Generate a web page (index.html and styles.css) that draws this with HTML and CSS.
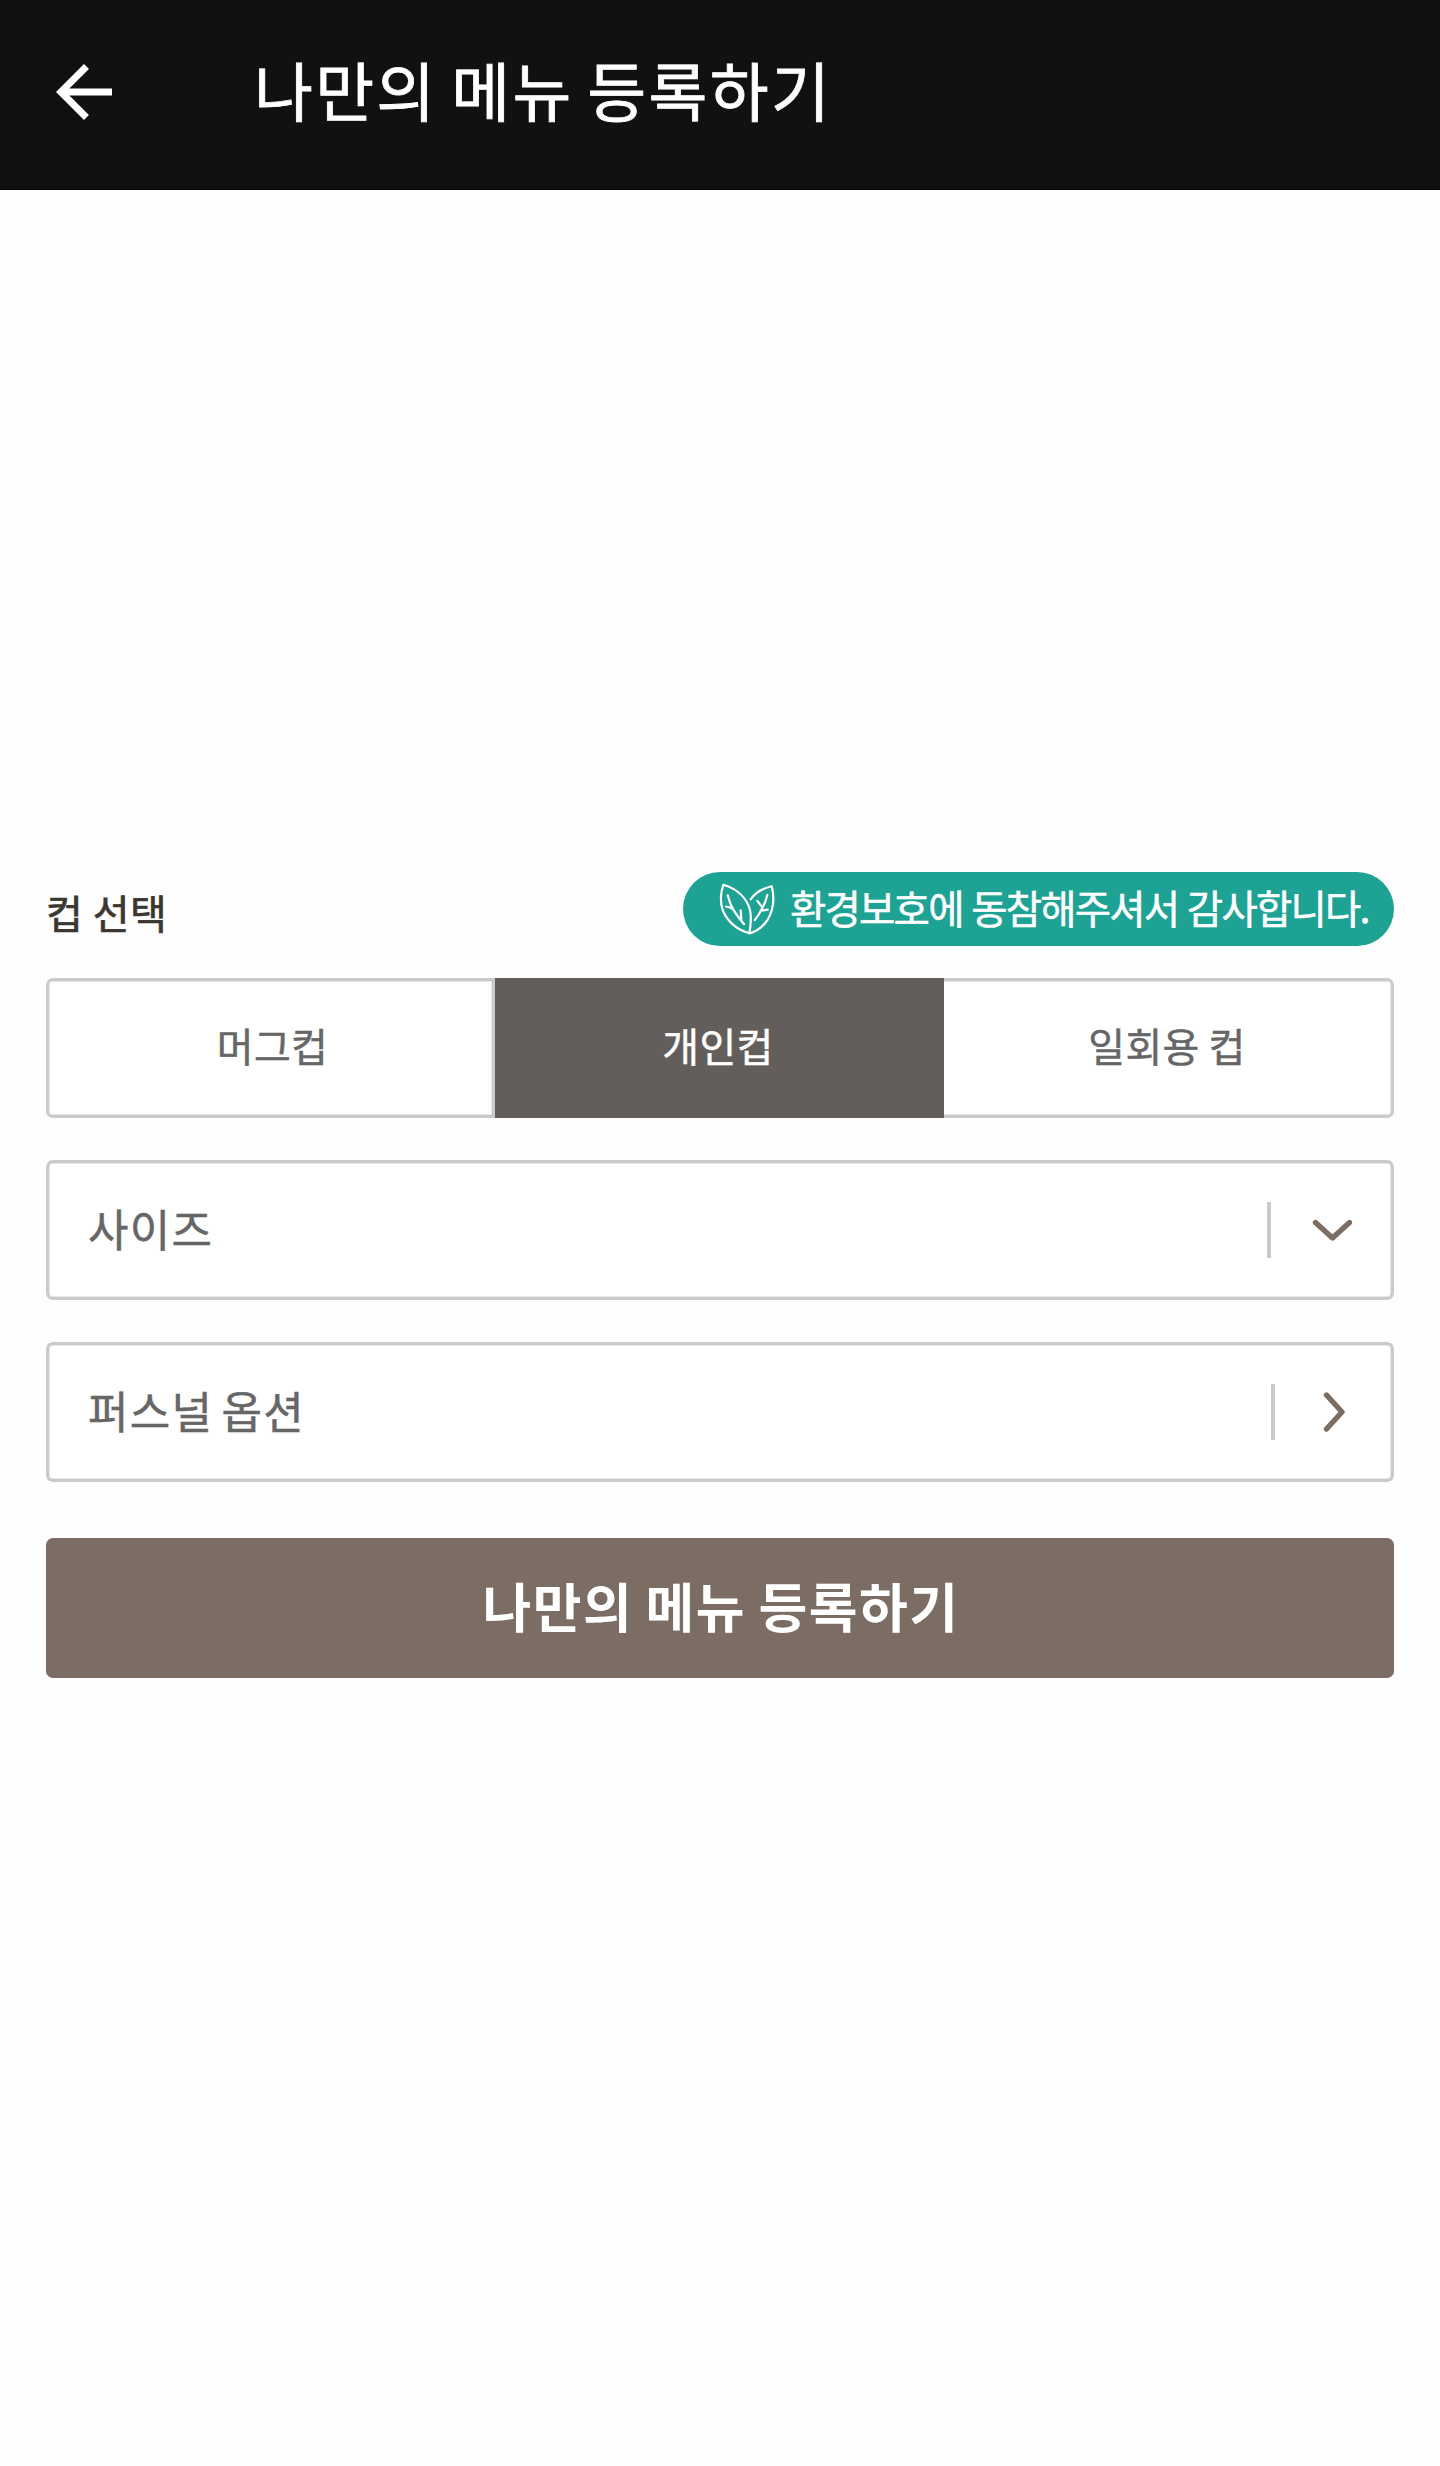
FILE: index.html
```html
<!DOCTYPE html>
<html lang="ko">
<head>
<meta charset="utf-8">
<title>나만의 메뉴 등록하기</title>
<link rel="stylesheet" href="styles.css">
</head>
<body>
<header class="topbar">
  <svg class="back" viewBox="0 0 24 24" aria-hidden="true"><path d="M20 11H7.83l5.59-5.59L12 4l-8 8 8 8 1.41-1.41L7.83 13H20z"/></svg>
  <h1 class="title">나만의 메뉴 등록하기</h1>
</header>
<main class="form">
  <div class="cup-head">
    <h2 class="cup-label">컵 선택</h2>
    <div class="eco">
      <svg class="leaf" viewBox="0 0 62 58" aria-hidden="true">
        <path d="M7.3 4.8C21 9 31 18 34 30c1.500 7 .8 15-.6 23.200C22 50 12 42 7 31 3.800 22 4.500 13 7.300 4.800z"/>
        <path d="M34.700 19.300C39 13 46 8.500 55.700 6.300 58.500 17 58 29 51.500 40 46.500 47 40.500 51.500 33.400 53.200"/>
        <path d="M11.700 15.300c1.300 5.200 3.300 10.500 5.800 14.600 3 5 6.500 9.500 10.600 14.300M10 26.500c3 .3 5.300 1.300 7.500 3.200M24.700 30.300l.6 10"/>
        <path d="M51.300 14.900c-1.300 5.500-3 9.800-5.300 13.800-2.200 4.300-4.500 8-7.200 11.500M41.300 20.900l5 6.500M51.700 29.700l-6.500 1"/>
      </svg>
      <span class="eco-text">환경보호에 동참해주셔서 감사합니다.</span>
    </div>
  </div>
  <div class="tabs">
    <button class="tab">머그컵</button>
    <button class="tab tab-on">개인컵</button>
    <button class="tab">일회용 컵</button>
  </div>
  <div class="field">
    <span class="field-text">사이즈</span>
    <span class="rule"></span>
    <svg class="chev chev-down" viewBox="0 0 40 22" aria-hidden="true"><path d="M3.500 3.500l17 15.500 17-15.500"/></svg>
  </div>
  <div class="field">
    <span class="field-text">퍼스널 옵션</span>
    <span class="rule"></span>
    <svg class="chev chev-right" viewBox="0 0 22 40" aria-hidden="true"><path d="M3.500 3l15.500 17L3.500 37"/></svg>
  </div>
  <button class="submit">나만의 메뉴 등록하기</button>
</main>
</body>
</html>
```

FILE: styles.css
```css
* { box-sizing: border-box; }
body {
  margin: 0;
  min-height: 2466px;
  background: #fefefe;
  font-family: "Noto Sans CJK KR", "Noto Sans CJK SC", sans-serif;
  color: #666;
  -webkit-text-stroke-width: 0.5px;
}
h1, h2 { margin: 0; font-weight: 400; }
button { font-family: inherit; border: 0; margin: 0; padding: 0; }
.topbar {
  display: flex;
  align-items: center;
  height: 190px;
  padding: 0 0 6px 42px;
  background: #111;
  border-bottom: 1px solid #060606;
}
.back { width: 84px; height: 84px; fill: #fff; }
.title {
  margin-left: 128px;
  padding-bottom: 7px;
  font-size: 64px;
  line-height: 90px;
  letter-spacing: 2.3px;
  word-spacing: -6.5px;
  color: #fff;
  white-space: nowrap;
  -webkit-text-stroke-width: 0.8px;
}
.form { padding: 682px 46px 0; }
.cup-head {
  display: flex;
  justify-content: space-between;
  height: 74px;
}
.cup-label {
  padding-top: 2px;
  font-size: 40px;
  line-height: 76px;
  letter-spacing: 0.6px;
  word-spacing: -2.5px;
  color: #3b3631;
  -webkit-text-stroke-width: 0.7px;
}
.eco {
  display: flex;
  width: 711px;
  height: 74px;
  padding: 8px 0 0 33px;
  border-radius: 37px;
  background: #1ea294;
}
.leaf {
  flex: none;
  width: 62px;
  height: 58px;
  fill: none;
  stroke: #fff;
  stroke-width: 2.2;
  stroke-linecap: round;
  stroke-linejoin: round;
}
.eco-text {
  margin-left: 12px;
  font-size: 39.5px;
  line-height: 54px;
  letter-spacing: -1.8px;
  word-spacing: -0.8px;
  color: #fff;
  white-space: nowrap;
}
.tabs {
  display: grid;
  grid-template-columns: 449px 449px 450px;
  height: 140px;
  margin-top: 32px;
}
.tab {
  padding: 0 0 6px 4px;
  border: 3px solid #cacaca;
  box-shadow: inset 0 0 0 1px #e6e6e6;
  background: #fff;
  font-size: 40px;
  line-height: 60px;
  letter-spacing: 0.3px;
  word-spacing: -2.5px;
  color: #666;
}
.tab:first-child { border-radius: 7px 0 0 7px; }
.tab:last-child {
  padding: 0 1px 6px 0;
  border-left: 0;
  border-radius: 0 7px 7px 0;
  box-shadow: inset -1px 0 0 #e6e6e6, inset 0 1px 0 #e6e6e6, inset 0 -1px 0 #e6e6e6;
}
.tab-on {
  padding: 0 3px 6px 0;
  border-color: #635e5b;
  background: #635e5b;
  box-shadow: none;
  color: #fff;
}
.field {
  display: flex;
  align-items: center;
  height: 140px;
  margin-top: 42px;
  padding-left: 39px;
  border: 3px solid #cacaca;
  border-radius: 7px;
  box-shadow: inset 0 0 0 1px #e6e6e6;
  background: #fff;
}
.field-text {
  flex: 1;
  padding-bottom: 5px;
  font-size: 44px;
  line-height: 64px;
  letter-spacing: 1.3px;
  word-spacing: -5.5px;
}
.rule { width: 4px; height: 56px; background: #cacaca; }
.chev {
  fill: none;
  stroke: #7c6d64;
  stroke-width: 5.4;
  stroke-linecap: round;
  stroke-linejoin: round;
}
.chev-down { width: 40px; height: 22px; margin: 0 39px 0 41px; }
.chev-right { width: 22px; height: 40px; margin: 0 46px 0 48px; }
.submit {
  display: block;
  width: 100%;
  height: 140px;
  margin-top: 56px;
  padding: 0 0 6px 2px;
  border-radius: 7px;
  background: #7c6d64;
  color: #fff;
  font-size: 53px;
  font-weight: 700;
  line-height: 80px;
  letter-spacing: 1.5px;
  word-spacing: -4px;
  -webkit-text-stroke-width: 0;
}
```
